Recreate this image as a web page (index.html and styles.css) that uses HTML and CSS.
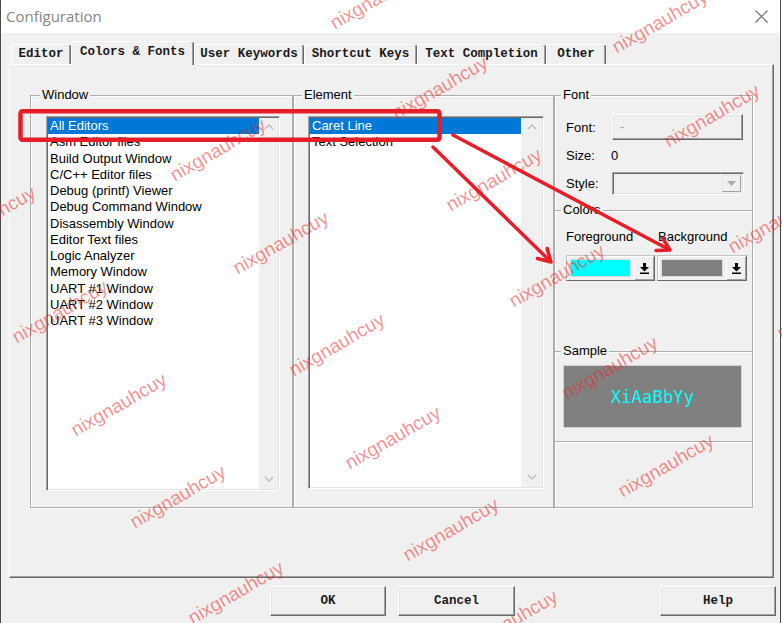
FILE: index.html
```html
<!DOCTYPE html>
<html>
<head>
<meta charset="utf-8">
<title>Configuration</title>
<link rel="stylesheet" href="styles.css">
</head>
<body>
<div class="window">
  <div class="titlebar">
    <span class="title">Configuration</span>
    <svg class="close" width="13" height="13" viewBox="0 0 13 13"><path d="M0.5 0.5L12.5 12.5M12.5 0.5L0.5 12.5" stroke="#6a6a6a" stroke-width="1.1" fill="none"/></svg>
  </div>
  <div class="tabs">
    <div class="tab t-editor">Editor</div>
    <div class="tab tab-active t-colors">Colors &amp; Fonts</div>
    <div class="tab t-user">User Keywords</div>
    <div class="tab t-short">Shortcut Keys</div>
    <div class="tab t-text">Text Completion</div>
    <div class="tab t-other">Other</div>
  </div>
  <div class="panel">
    <div class="groups">
      <div class="group g-window">
        <div class="glabel gl-window">Window</div>
        <div class="listbox lb-window">
          <ul class="items">
            <li class="sel">All Editors</li>
            <li>Asm Editor files</li>
            <li>Build Output Window</li>
            <li>C/C++ Editor files</li>
            <li>Debug (printf) Viewer</li>
            <li>Debug Command Window</li>
            <li>Disassembly Window</li>
            <li>Editor Text files</li>
            <li>Logic Analyzer</li>
            <li>Memory Window</li>
            <li>UART #1 Window</li>
            <li>UART #2 Window</li>
            <li>UART #3 Window</li>
          </ul>
          <div class="vscroll">
            <svg width="10" height="6" viewBox="0 0 10 6"><polyline points="1,5 5,1 9,5" fill="none" stroke="#bdbdbd" stroke-width="1.4"/></svg>
            <svg width="10" height="6" viewBox="0 0 10 6"><polyline points="1,1 5,5 9,1" fill="none" stroke="#bdbdbd" stroke-width="1.4"/></svg>
          </div>
        </div>
      </div>
      <div class="group g-element">
        <div class="glabel gl-element">Element</div>
        <div class="listbox lb-element">
          <ul class="items">
            <li class="sel">Caret Line</li>
            <li>Text Selection</li>
          </ul>
          <div class="vscroll vscroll-wide">
            <svg width="10" height="6" viewBox="0 0 10 6"><polyline points="1,5 5,1 9,5" fill="none" stroke="#bdbdbd" stroke-width="1.4"/></svg>
            <svg width="10" height="6" viewBox="0 0 10 6"><polyline points="1,1 5,5 9,1" fill="none" stroke="#bdbdbd" stroke-width="1.4"/></svg>
          </div>
        </div>
      </div>
      <div class="rightcol">
        <div class="group g-font">
          <div class="glabel">Font</div>
          <div class="frow frow-1">
            <span class="flabel">Font:</span>
            <div class="fontbtn">-</div>
          </div>
          <div class="frow frow-2">
            <span class="flabel">Size:</span>
            <span class="fsize">0</span>
          </div>
          <div class="frow frow-3">
            <span class="flabel">Style:</span>
            <div class="combo">
              <div class="combo-btn"><svg width="9" height="5" viewBox="0 0 9 5"><polygon points="0,0 9,0 4.5,5" fill="#a8a8a8"/></svg></div>
            </div>
          </div>
        </div>
        <div class="group g-colors">
          <div class="glabel">Colors</div>
          <div class="crow">
            <div class="ccol ccol-fg">
              <div class="clabel">Foreground</div>
              <div class="picker">
                <div class="swatch swatch-fg"></div>
                <div class="pbtn"><svg width="9" height="11" viewBox="0 0 9 11"><path d="M3 0h3v4h3L4.5 8.5 0 4h3z" fill="#000"/><rect x="0" y="9.5" width="9" height="1.5" fill="#000"/></svg></div>
              </div>
            </div>
            <div class="ccol ccol-bg">
              <div class="clabel">Background</div>
              <div class="picker">
                <div class="swatch swatch-bg"></div>
                <div class="pbtn"><svg width="9" height="11" viewBox="0 0 9 11"><path d="M3 0h3v4h3L4.5 8.5 0 4h3z" fill="#000"/><rect x="0" y="9.5" width="9" height="1.5" fill="#000"/></svg></div>
              </div>
            </div>
          </div>
        </div>
        <div class="group g-sample">
          <div class="glabel">Sample</div>
          <div class="sample">XiAaBbYy</div>
        </div>
        <div class="group g-empty"></div>
      </div>
    </div>
  </div>
  <div class="btnrow">
    <div class="btn btn-ok">OK</div>
    <div class="btn btn-cancel">Cancel</div>
    <div class="btn btn-help">Help</div>
  </div>
</div>

<svg class="annot" width="782" height="623" viewBox="0 0 782 623">
  <rect x="20.5" y="111.2" width="419" height="28.5" rx="2" fill="none" stroke="#e61e28" stroke-width="4.5"/>
  <g stroke="#e61e28" stroke-width="3.5" stroke-linecap="round" stroke-linejoin="round" fill="none">
    <line x1="433" y1="147" x2="550" y2="261"/>
    <polyline points="547.2,248.5 551,262 537.4,258.5"/>
    <line x1="453" y1="135" x2="669" y2="249.5"/>
    <polyline points="662.6,238.1 670,250 656,250.5"/>
  </g>
</svg>

<div class="wm wm1">nixgnauhcuy</div>
<div class="wm wm2">nixgnauhcuy</div>
<div class="wm wm3">nixgnauhcuy</div>
<div class="wm wm4">nixgnauhcuy</div>
<div class="wm wm5">nixgnauhcuy</div>
<div class="wm wm6">nixgnauhcuy</div>
<div class="wm wm7">nixgnauhcuy</div>
<div class="wm wm8">nixgnauhcuy</div>
<div class="wm wm9">nixgnauhcuy</div>
<div class="wm wm10">nixgnauhcuy</div>
<div class="wm wm11">nixgnauhcuy</div>
<div class="wm wm12">nixgnauhcuy</div>
<div class="wm wm13">nixgnauhcuy</div>
<div class="wm wm14">nixgnauhcuy</div>
<div class="wm wm15">nixgnauhcuy</div>
<div class="wm wm16">nixgnauhcuy</div>
<div class="wm wm17">nixgnauhcuy</div>
<div class="wm wm18">nixgnauhcuy</div>
<div class="wm wm19">nixgnauhcuy</div>
<div class="wm wm20">nixgnauhcuy</div>
<div class="wm wm21">nixgnauhcuy</div>
</body>
</html>
```

FILE: styles.css
```css
html, body {
  margin: 0;
  padding: 0;
}
body {
  width: 782px;
  height: 623px;
  overflow: hidden;
  position: relative;
  background: #fff;
  font-family: "Liberation Sans", Arial, sans-serif;
  font-size: 13px;
  color: #000;
}

.window {
  box-sizing: border-box;
  width: 781px;
  height: 623px;
  border-left: 1px solid #4a4a4a;
  border-right: 1px solid #4a4a4a;
  background: #f0f0f0;
}

/* title bar */
.titlebar {
  height: 33px;
  background: #fff;
  display: flex;
  align-items: center;
  justify-content: space-between;
  padding: 0 12px 0 5px;
}
.title {
  font-family: "Open Sans", "Noto Sans", sans-serif;
  font-size: 15px;
  color: #858585;
  line-height: 20px;
  margin-top: -1px;
}
.close {
  display: block;
  margin-top: -1px;
}

/* tabs */
.tabs {
  display: flex;
  align-items: flex-end;
  height: 23px;
  margin: 8px 0 0 10px;
}
.tab {
  box-sizing: border-box;
  height: 20px;
  border-top: 1px solid #fff;
  border-left: 1px solid #fff;
  border-right: 1px solid #696969;
  box-shadow: inset -1px 0 0 #a0a0a0;
  border-radius: 3px 3px 0 0;
  font-family: "Liberation Mono", "Courier New", monospace;
  font-weight: bold;
  font-size: 12.5px;
  line-height: 18px;
  text-align: center;
  white-space: nowrap;
  color: #1a1a1a;
  background: #f0f0f0;
}
.tab-active {
  height: 24px;
  line-height: 20px;
  margin-bottom: -1px;
  position: relative;
  z-index: 1;
}
.t-editor { width: 60px; }
.t-colors { width: 123px; }
.t-user { width: 110px; }
.t-short { width: 113px; }
.t-text { width: 129px; }
.t-other { width: 60px; }

/* panel */
.panel {
  box-sizing: border-box;
  width: 765px;
  height: 514px;
  margin-left: 8px;
  border: 1px solid;
  border-color: #fff #696969 #696969 #fff;
  box-shadow: inset -1px -1px 0 #a0a0a0;
  padding: 30px 0 0 20px;
}
.groups {
  display: flex;
  height: 413px;
}
.group {
  box-sizing: border-box;
  border: 1px solid #adadad;
  box-shadow: inset 1px 1px 0 #fff, 1px 1px 0 #fff;
}
.glabel {
  width: fit-content;
  margin: -9px 0 0 6px;
  padding: 0 2px;
  background: #f0f0f0;
  line-height: 16px;
  font-size: 13px;
  color: #000;
}
.gl-window { margin-left: 9px; }
.gl-element { margin-left: 8px; }

.g-window {
  width: 263px;
  height: 413px;
}
.g-element {
  width: 261px;
  height: 413px;
}
.rightcol {
  width: 199px;
  display: flex;
  flex-direction: column;
}

/* listboxes */
.listbox {
  box-sizing: border-box;
  display: flex;
  background: #fff;
  border: 1px solid;
  border-color: #a0a0a0 #fff #fff #a0a0a0;
  box-shadow: inset 1px 1px 0 #696969, inset -1px -1px 0 #e3e3e3;
  padding: 1px;
  margin-top: 13px;
}
.lb-window {
  width: 234px;
  height: 375px;
  margin-left: 15px;
}
.lb-element {
  width: 236px;
  height: 373px;
  margin-left: 14px;
}
.items {
  list-style: none;
  margin: 0;
  padding: 0;
  flex: 1;
}
.items li {
  font-size: 13px;
  line-height: 16.25px;
  height: 16.25px;
  padding-left: 2px;
  white-space: nowrap;
}
.items li.sel {
  background: #0078d7;
  color: #fff;
}
.vscroll {
  width: 19px;
  background: #f0f0f0;
  display: flex;
  flex-direction: column;
  justify-content: space-between;
  align-items: center;
  padding: 6px 0 7px;
  box-sizing: border-box;
}
.vscroll svg { display: block; }
.vscroll-wide { width: 21px; }

/* font group */
.g-font {
  height: 115px;
  border-bottom: none;
}
.frow {
  display: flex;
  align-items: center;
  margin-left: 11px;
}
.frow-1 { height: 26px; margin-top: 11px; }
.frow-2 { height: 30px; }
.frow-3 { height: 25px; margin-top: 1px; }
.flabel {
  width: 46px;
  font-size: 13px;
  color: #000;
}
.fsize {
  margin-left: -1px;
  font-size: 13px;
}
.fontbtn {
  box-sizing: border-box;
  width: 131px;
  height: 26px;
  border: 1px solid;
  border-color: #fff #696969 #696969 #fff;
  box-shadow: inset -1px -1px 0 #a0a0a0, inset 1px 1px 0 #e3e3e3;
  padding-left: 7px;
  line-height: 23px;
  color: #a0a0a0;
  font-size: 13px;
}
.combo {
  box-sizing: border-box;
  width: 132px;
  height: 23px;
  border: 1px solid;
  border-color: #a0a0a0 #fff #fff #a0a0a0;
  box-shadow: inset 1px 1px 0 #696969, inset -1px -1px 0 #e3e3e3;
  background: #f0f0f0;
  display: flex;
  justify-content: flex-end;
  padding: 2px;
}
.combo-btn {
  box-sizing: border-box;
  width: 19px;
  height: 17px;
  border: 1px solid;
  border-color: #e3e3e3 #a0a0a0 #a0a0a0 #e3e3e3;
  display: flex;
  align-items: center;
  justify-content: center;
}
.combo-btn svg { display: block; }

/* colors group */
.g-colors {
  height: 141px;
  border-bottom: none;
}
.crow {
  display: flex;
  margin: 11px 0 0 11px;
}
.ccol-fg { width: 89px; margin-right: 2px; }
.ccol-bg { width: 90px; }
.clabel {
  line-height: 16px;
  font-size: 13px;
  white-space: nowrap;
}
.ccol-bg .clabel { padding-left: 1px; }
.picker {
  box-sizing: border-box;
  height: 26px;
  margin-top: 10px;
  display: flex;
  border: 1px solid;
  border-color: #c4c4c4 #696969 #696969 #c4c4c4;
  box-shadow: inset 1px 1px 0 #fff;
}
.swatch {
  flex: 1;
  margin: 3px;
  border: 1px solid #dadada;
}
.swatch-fg { background: #00ffff; }
.swatch-bg { background: #808080; }
.pbtn {
  box-sizing: border-box;
  width: 20px;
  border-left: 1px solid #fff;
  border-top: 1px solid #fff;
  box-shadow: inset -1px -1px 0 #a0a0a0;
  display: flex;
  align-items: center;
  justify-content: center;
}
.pbtn svg { display: block; }

/* sample group */
.g-sample {
  height: 90px;
  border-bottom: none;
}
.sample {
  box-sizing: border-box;
  width: 179px;
  height: 63px;
  margin: 6px 0 0 8px;
  background: #808080;
  border: 1px solid #d2d2d2;
  display: flex;
  align-items: center;
  justify-content: center;
  font-family: "DejaVu Sans Mono", monospace;
  font-size: 17px;
  color: #00ffff;
  letter-spacing: 0.2px;
}
.g-empty {
  height: 67px;
}

/* buttons */
.btnrow {
  display: flex;
  margin-top: 8px;
  padding: 0 4px 0 269px;
}
.btn {
  box-sizing: border-box;
  width: 116px;
  height: 30px;
  border: 1px solid;
  border-color: #fff #696969 #696969 #fff;
  box-shadow: inset -1px -1px 0 #a0a0a0, inset 1px 1px 0 #e3e3e3;
  font-family: "Liberation Mono", "Courier New", monospace;
  font-weight: bold;
  font-size: 12.5px;
  line-height: 28px;
  text-align: center;
  color: #1a1a1a;
}
.btn-cancel {
  width: 117px;
  margin-left: 12px;
}
.btn-help {
  margin-left: auto;
}

/* annotation overlay */
.annot {
  position: absolute;
  left: 0;
  top: 0;
  pointer-events: none;
}

/* watermarks */
.wm {
  position: absolute;
  font-family: "Liberation Sans", Arial, sans-serif;
  font-size: 19px;
  line-height: 20px;
  color: rgba(232, 40, 40, 0.5);
  white-space: nowrap;
  transform: translate(-50%, -50%) rotate(-30deg);
  pointer-events: none;
}
.wm1 { left: 378px; top: -2px; }
.wm2 { left: 660px; top: 22px; }
.wm3 { left: 440px; top: 88px; }
.wm4 { left: 218px; top: 150px; }
.wm5 { left: -12px; top: 218px; }
.wm6 { left: 494px; top: 180px; }
.wm7 { left: 281px; top: 243px; }
.wm8 { left: 776px; top: 222px; }
.wm9 { left: 557px; top: 276px; }
.wm10 { left: 60px; top: 312px; }
.wm11 { left: 337px; top: 345px; }
.wm12 { left: 825px; top: 308px; }
.wm13 { left: 119px; top: 405px; }
.wm14 { left: 610px; top: 368px; }
.wm15 { left: 393px; top: 438px; }
.wm16 { left: 666px; top: 466px; }
.wm17 { left: 178px; top: 497px; }
.wm18 { left: 451px; top: 530px; }
.wm19 { left: 236px; top: 593px; }
.wm20 { left: 510px; top: 622px; }
.wm21 { left: 712px; top: 116px; }
```
